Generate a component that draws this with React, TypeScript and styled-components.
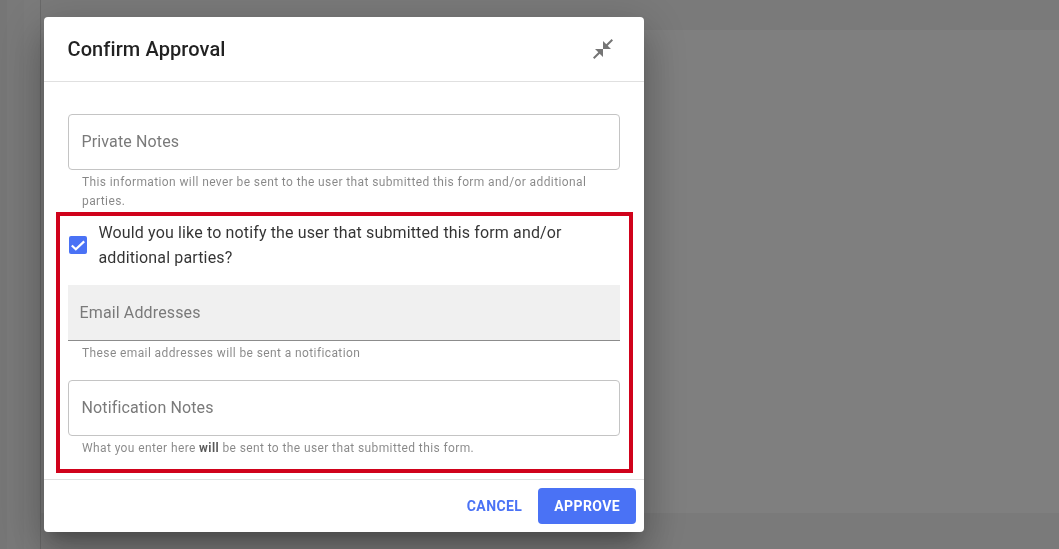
import styled, { createGlobalStyle } from 'styled-components';

const GlobalStyle = createGlobalStyle`
    html, body {
        margin: 0;
        padding: 0;
        height: 100%;
        overflow: hidden;
        font-family: Roboto, 'Liberation Sans', sans-serif;
    }
    #root {
        height: 100%;
    }
    * {
        box-sizing: border-box;
    }
`;

const Page = styled.div`
    display: flex;
    height: 549px;
    background-color: #f4f4f4;
`;

const Sidebar = styled.div`
    width: 41px;
    flex-shrink: 0;
    background: linear-gradient(
        to right,
        #ededed 0 7px,
        #f2f2f2 7px 24px,
        #f6f6f6 24px 40px
    );
    border-right: 1px solid #d4d4d4;
`;

const Main = styled.div`
    flex: 1;
    padding: 30px 0 36px;
    display: flex;
`;

const Panel = styled.div`
    flex: 1;
    background-color: #ffffff;
`;

const Backdrop = styled.div`
    position: fixed;
    inset: 0;
    background-color: rgba(0, 0, 0, 0.5);
`;

const Modal = styled.div`
    position: fixed;
    left: 44px;
    top: 17px;
    width: 600px;
    height: 515px;
    display: flex;
    flex-direction: column;
    background-color: #ffffff;
    border-radius: 4px;
    box-shadow: 0 11px 15px -7px rgba(0, 0, 0, 0.24),
        0 24px 38px 3px rgba(0, 0, 0, 0.17),
        0 9px 46px 8px rgba(0, 0, 0, 0.14);
`;

const Header = styled.div`
    height: 65px;
    flex-shrink: 0;
    display: flex;
    align-items: center;
    justify-content: space-between;
    padding: 0 29px 0 23.5px;
    border-bottom: 1px solid #e0e0e0;
`;

const Title = styled.h2`
    margin: 0;
    font-size: 20px;
    font-weight: 500;
    letter-spacing: 0.1px;
    color: rgba(0, 0, 0, 0.87);
`;

const IconButton = styled.button`
    display: flex;
    width: 24px;
    height: 24px;
    padding: 0;
    border: none;
    background: none;
    color: #757575;
    cursor: pointer;
`;

const Body = styled.div`
    flex: 1;
    padding: 32px 11px 0 12px;
`;

const Group = styled.div`
    padding: 0 13px 0 12px;
`;

const PlainField = styled.div`
    height: 56px;
    padding: 0 12.5px 2px;
    display: flex;
    align-items: center;
    background-color: #ffffff;
    border: 1px solid #c4c4c4;
    border-radius: 4px;
    font-size: 16px;
    letter-spacing: 0.13px;
    color: #7a7a7a;
`;

const FilledField = styled.div`
    height: 56px;
    padding: 0 11.5px;
    display: flex;
    align-items: center;
    background-color: #f0f0f0;
    border-bottom: 1px solid #8c8c8c;
    font-size: 16px;
    letter-spacing: 0.13px;
    color: #7a7a7a;
`;

const Helper = styled.p`
    margin: 3px 0 0;
    padding: 0 14px;
    font-size: 12px;
    line-height: 19px;
    letter-spacing: 0.39px;
    color: rgba(0, 0, 0, 0.47);

    strong {
        font-weight: 700;
        color: rgba(0, 0, 0, 0.65);
    }
`;

const NotifySection = styled.section`
    margin-top: 1px;
    height: 261px;
    padding: 4px 9px 0 8px;
    border: 4px solid #d0021b;
`;

const CheckRow = styled.label`
    display: flex;
    align-items: center;
    gap: 11.5px;
    padding-left: 1px;
    font-size: 16px;
    line-height: 25px;
    letter-spacing: 0.14px;
    color: rgba(0, 0, 0, 0.8);
`;

const CheckBox = styled.span`
    width: 18px;
    height: 18px;
    flex-shrink: 0;
    display: flex;
    background-color: #4a72f5;
    border-radius: 2px;
    color: #ffffff;
`;

const Spacer = styled.div<{ $h: number }>`
    height: ${({ $h }) => $h}px;
`;

const Footer = styled.div`
    height: 53px;
    flex-shrink: 0;
    display: flex;
    align-items: center;
    justify-content: flex-end;
    padding: 0 8px;
    border-top: 1px solid #e0e0e0;
`;

const ActionButton = styled.button<{ $primary?: boolean }>`
    height: 36px;
    padding: 0 16px;
    border: none;
    border-radius: 4px;
    font-family: inherit;
    font-size: 14px;
    font-weight: 700;
    letter-spacing: 0.4px;
    background-color: ${({ $primary }) => ($primary ? '#4a72f5' : 'transparent')};
    color: ${({ $primary }) => ($primary ? '#ffffff' : '#4a72f5')};
    cursor: pointer;
`;

export default function App() {
    return (
        <>
            <GlobalStyle />
            <Page>
                <Sidebar />
                <Main>
                    <Panel />
                </Main>
            </Page>
            <Backdrop />
            <Modal>
                <Header>
                    <Title>Confirm Approval</Title>
                    <IconButton aria-label="Collapse">
                        <svg width="24" height="24" viewBox="0 0 24 24" fill="currentColor">
                            <path d="M22 3.41l-5.29 5.29L20 12h-8V4l3.29 3.29L20.59 2 22 3.41zM3.41 22l5.29-5.29L12 20v-8H4l3.29 3.29L2 20.59 3.41 22z" />
                        </svg>
                    </IconButton>
                </Header>
                <Body>
                    <Group>
                        <PlainField>Private Notes</PlainField>
                        <Helper>
                            This information will never be sent to the user that submitted this form and/or additional parties.
                        </Helper>
                    </Group>
                    <NotifySection>
                        <CheckRow>
                            <CheckBox>
                                <svg width="18" height="18" viewBox="0 0 18 18" fill="none" stroke="currentColor" strokeWidth="2.2">
                                    <path d="M2.8 9.5L6.8 13.2L15.2 5.4" />
                                </svg>
                            </CheckBox>
                            <span>
                                Would you like to notify the user that submitted this form and/or additional parties?
                            </span>
                        </CheckRow>
                        <Spacer $h={15} />
                        <FilledField>Email Addresses</FilledField>
                        <Helper>These email addresses will be sent a notification</Helper>
                        <Spacer $h={17} />
                        <PlainField>Notification Notes</PlainField>
                        <Helper>
                            What you enter here <strong>will</strong> be sent to the user that submitted this form.
                        </Helper>
                    </NotifySection>
                </Body>
                <Footer>
                    <ActionButton>CANCEL</ActionButton>
                    <ActionButton $primary>APPROVE</ActionButton>
                </Footer>
            </Modal>
        </>
    );
}
